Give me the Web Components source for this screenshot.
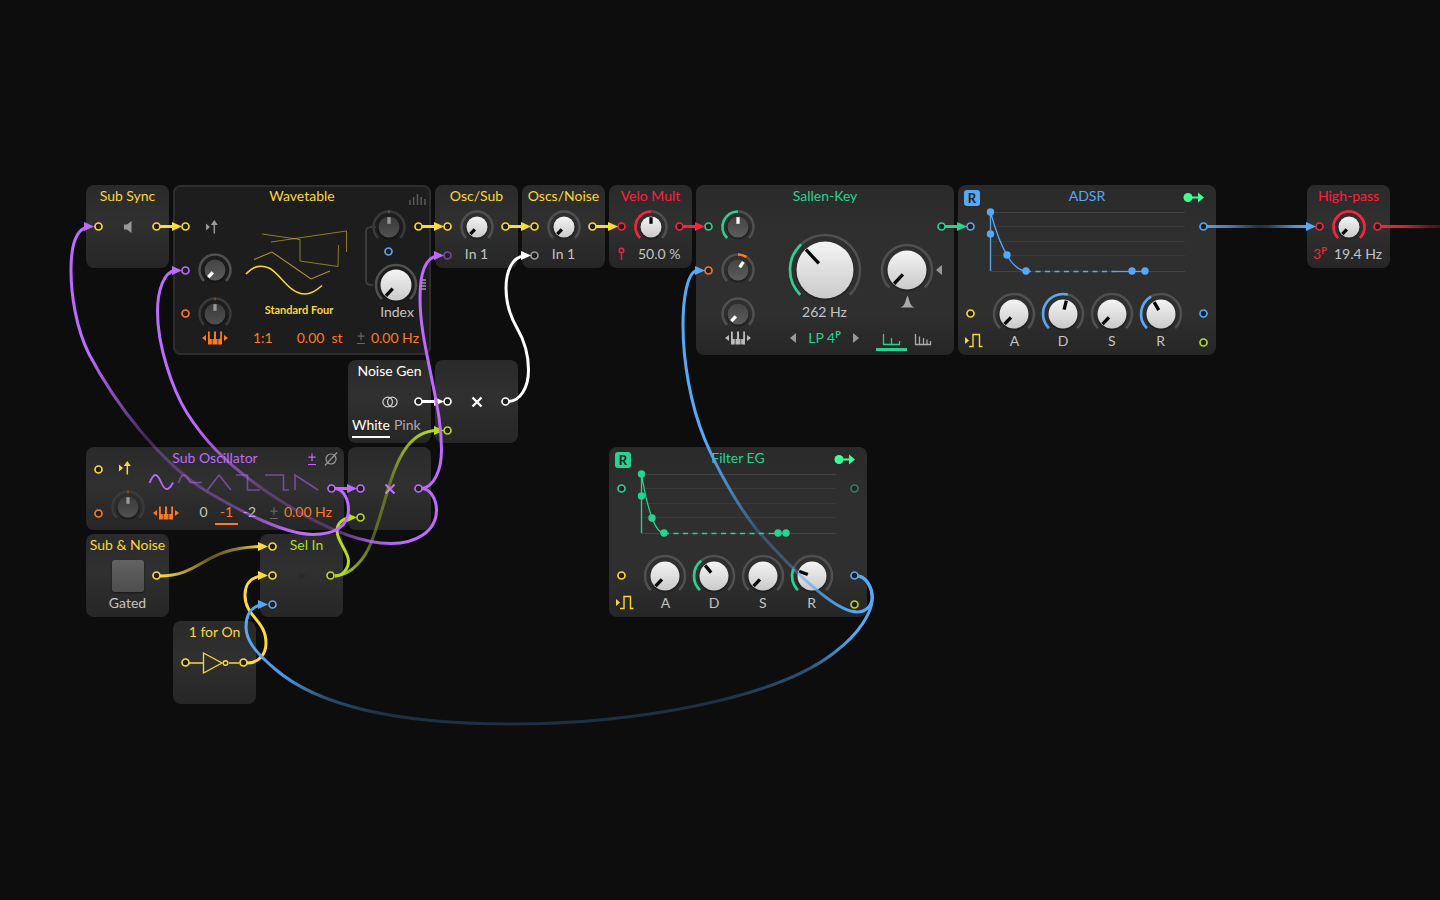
<!DOCTYPE html>
<html lang="en">
<head>
<meta charset="utf-8">
<title>Synth patch</title>
<style>
  body { margin: 0; background: #0d0d0d; font-family: Lato, "Open Sans", sans-serif; }
</style>
</head>
<body>
<synth-patch></synth-patch>

<template id="patch">
  <style>
    :host {
      --yellow: #fbd838; --purple: #bd6bff; --orange: #ff7a1a; --red: #ff1f3d;
      --green: #26d391; --blue: #57a8f5; --lime: #b4dc1c; --grey: #c4c4c4;
      display: block; position: relative; min-height: 100vh; overflow: hidden;
      color: var(--grey); font-size: 14px;
    }
    patch-node { color: var(--tint); }
    .yellow { --tint: var(--yellow); } .purple { --tint: var(--purple); }
    .orange { --tint: var(--orange); } .red { --tint: var(--red); }
    .green { --tint: var(--green); } .blue { --tint: var(--blue); }
    .lime { --tint: var(--lime); } .white { --tint: #fff; } .grey { --tint: #999; }
    .dim { opacity: .5; }
    .in { grid-column: 1; justify-self: start; }
    .out { grid-column: -2 / -1; justify-self: end; }
    .r1 { grid-row: 1; } .r2 { grid-row: 2; } .r3 { grid-row: 3; } .r5 { grid-row: 5; } .r6 { grid-row: 6; }
    .r34 { grid-row: 3 / 5; align-self: center; }
    .c2 { grid-column: 2; } .c8 { grid-column: 8; }
    .mid { place-self: center; }
    .top { align-self: start; }
    .all { grid-column: 1 / -1; }
    .label { color: var(--grey); line-height: 25px; align-self: start; text-align: center; white-space: nowrap; }
    patch-port, patch-glyph, patch-knob, .tint { color: var(--tint); }
    .from2 { grid-column: 2 / -1; text-align: left; padding-left: 2px; }
    .row { display: flex; align-items: center; line-height: 20px; align-self: start; white-space: nowrap; }
    button { all: unset; cursor: pointer; display: flex; align-items: center; justify-content: center; }
    label { position: relative; cursor: pointer; }
    label input { position: absolute; inset: 0; margin: 0; opacity: 0; width: 100%; height: 100%; }
    fieldset { border: 0; margin: 0; padding: 0; min-width: 0; }
    .choice { line-height: 18px; }
    .choice label { height: 20px; text-align: center; border-bottom: 2px solid transparent; }
    .choice label:has(:checked) { color: var(--tint); border-color: var(--tint); }
    .modes label { height: 20px; border-bottom: 3px solid transparent; }
    .modes label:has(:checked) { border-color: var(--tint); }
    sup { font-size: 9px; line-height: 0; vertical-align: 5px; font-weight: 700; }
    .badge { grid-area: 1 / 1; width: 16px; height: 16px; margin: 5px 0 0 6px; align-self: start;
      border-radius: 3px; background: var(--tint); color: #222; font-weight: 700; font-size: 13px; line-height: 16px; }
    .graph, .knobs { grid-column: 2 / 9; padding: 0 3px 0 5px; }
    .graph { grid-row: 2 / 4; }
    .knobs { grid-row: 5 / 7; display: grid; grid-template-columns: repeat(4, 1fr); align-items: start; }
    .knobs div { display: grid; grid-template-rows: 29px 26px; place-items: center; color: var(--grey); line-height: 26px; }
    .pad { width: 32px; height: 32px; border-radius: 3px; background: linear-gradient(#626262, #4e4e4e); box-shadow: 0 1px 2px #161616; }
  </style>

  <patch-node class="yellow" name="Sub Sync" style="left:86px;top:185px">
    <patch-port class="in r2"></patch-port>
    <patch-glyph name="speaker" class="c2 r2 mid grey"></patch-glyph>
    <patch-port class="out r2"></patch-port>
  </patch-node>

  <patch-node class="yellow" name="Wavetable" wide selected style="left:173px;top:185px">
    <patch-glyph name="bars" class="out r1 grey dim" style="align-self:center;margin-right:5px"></patch-glyph>
    <patch-port class="in r2"></patch-port>
    <patch-port class="in r34 purple"></patch-port>
    <patch-port class="in r5 orange"></patch-port>
    <patch-glyph name="retrig" class="c2 r2 mid grey"></patch-glyph>
    <patch-knob class="c2 r34 mid" label="Pitch mod" dark value="-137"></patch-knob>
    <patch-knob class="c2 r5 mid orange" label="Glide" dark faint tick value="0"></patch-knob>
    <patch-glyph name="keys" class="c2 r6 orange top" style="justify-self:center"></patch-glyph>
    <div style="grid-area:2/3/6/8;width:138px;padding:17px 0 0 1px;display:flex;flex-direction:column;align-items:center;align-self:start">
      <patch-glyph name="tables"></patch-glyph>
      <span style="font-size:11px;line-height:18px;font-weight:700">Standard Four</span>
    </div>
    <patch-glyph name="bracket" style="grid-area:2/7/5/8;place-self:center end"></patch-glyph>
    <patch-knob class="c8 r2 mid blue" label="Unison" dark faint tick value="0"></patch-knob>
    <patch-port class="c8 r3 blue top" style="--h:20px;justify-self:center"></patch-port>
    <div style="grid-area:4/8/5/10;display:flex;align-items:center;gap:2px;place-self:center start">
      <patch-knob label="Index" size="44" cap="15" arc="20" value="-137"></patch-knob>
      <patch-glyph name="stripes" class="grey"></patch-glyph>
    </div>
    <span class="label" style="grid-area:5/8/6/10;width:46px">Index</span>
    <div class="row tint orange" style="grid-area:6/3/7/10;padding:0 12px 0 24px">
      <output>1:1</output>
      <output style="margin-left:24px">0.00</output><span style="margin-left:7px">st</span>
      <patch-glyph name="pm" style="--tint:#666;margin-left:auto"></patch-glyph><output style="margin-left:6px">0.00 Hz</output>
    </div>
    <patch-port class="out r2"></patch-port>
  </patch-node>

  <patch-node class="yellow" name="Osc/Sub" style="left:435px;top:185px">
    <patch-port class="in r2"></patch-port>
    <patch-port class="in r3 purple dim"></patch-port>
    <patch-knob class="c2 r2 mid" label="Osc/Sub blend" value="-137"></patch-knob>
    <span class="label all r3">In 1</span>
    <patch-port class="out r2"></patch-port>
  </patch-node>

  <patch-node class="yellow" name="Oscs/Noise" style="left:522px;top:185px">
    <patch-port class="in r2"></patch-port>
    <patch-port class="in r3 grey"></patch-port>
    <patch-knob class="c2 r2 mid" label="Oscs/Noise blend" value="-137"></patch-knob>
    <span class="label all r3">In 1</span>
    <patch-port class="out r2"></patch-port>
  </patch-node>

  <patch-node class="red" name="Velo Mult" style="left:609px;top:185px">
    <patch-port class="in r2"></patch-port>
    <patch-glyph name="pin" class="in r3 top"></patch-glyph>
    <patch-knob class="c2 r2 mid" label="Velocity" value="0" fill="-135"></patch-knob>
    <span class="label from2 r3">50.0 %</span>
    <patch-port class="out r2"></patch-port>
  </patch-node>

  <patch-node class="green" name="Sallen-Key" wide style="left:696px;top:185px">
    <patch-port class="in r2"></patch-port>
    <patch-port class="in r34 orange"></patch-port>
    <patch-knob class="c2 r2 mid" label="Gain" dark value="0" fill="-135"></patch-knob>
    <patch-knob class="c2 r34 mid orange" label="Cutoff mod" dark value="33" fill="0"></patch-knob>
    <patch-knob class="c2 r5 mid" label="Keytrack" dark value="-137"></patch-knob>
    <patch-glyph name="keys" class="c2 r6 top" style="--tint:#bbb;justify-self:center"></patch-glyph>
    <patch-knob style="grid-area:3/4/5/7;place-self:center" label="Cutoff" size="74" cap="28" arc="35" value="-43" fill="-135"></patch-knob>
    <span class="label" style="grid-area:5/3/6/8">262 Hz</span>
    <div class="row" style="grid-area:6/3/7/8;justify-content:center;gap:12px">
      <button aria-label="Previous mode"><patch-glyph name="left" class="grey"></patch-glyph></button>
      <span>LP 4<sup>P</sup></span>
      <button aria-label="Next mode"><patch-glyph name="right" class="grey"></patch-glyph></button>
    </div>
    <div style="grid-area:3/7/5/10;display:flex;align-items:center;justify-content:flex-end;gap:2px;padding-right:12px">
      <patch-knob label="Resonance" size="54" cap="19" arc="25" value="-137"></patch-knob>
      <patch-glyph name="left" class="grey"></patch-glyph>
    </div>
    <patch-glyph name="peak" class="top" style="grid-area:5/7/6/10;width:82px;--tint:#aaa"></patch-glyph>
    <fieldset class="row modes" style="grid-area:6/7/7/10;padding-left:8px" aria-label="Resonance mode">
      <label style="width:31px"><input type="radio" name="res" aria-label="Few poles" checked><patch-glyph name="comb3"></patch-glyph></label>
      <label style="width:32px"><input type="radio" name="res" aria-label="Many poles"><patch-glyph name="comb5" style="--tint:#aaa"></patch-glyph></label>
    </fieldset>
    <patch-port class="out r2"></patch-port>
  </patch-node>

  <patch-node class="blue" name="ADSR" wide style="left:958px;top:185px">
    <button class="badge" aria-label="Retrigger">R</button>
    <patch-glyph name="send" style="grid-area:1/8/2/10;justify-self:end;margin-right:12px;--tint:#3dff94"></patch-glyph>
    <patch-port class="in r2"></patch-port>
    <patch-port class="in r5 yellow"></patch-port>
    <patch-glyph name="gate" class="in r6 yellow top"></patch-glyph>
    <envelope-graph class="graph" points="17,43 36,59 142,59 155,59" dash="126"></envelope-graph>
    <div class="knobs">
      <div><patch-knob label="Attack" size="46" cap="14" arc="20" value="-137"></patch-knob>A</div>
      <div><patch-knob label="Decay" size="46" cap="14" arc="20" value="14" fill="-135"></patch-knob>D</div>
      <div><patch-knob label="Sustain" size="46" cap="14" arc="20" value="-137"></patch-knob>S</div>
      <div><patch-knob label="Release" size="46" cap="14" arc="20" value="-30" fill="-135"></patch-knob>R</div>
    </div>
    <patch-port class="out r2"></patch-port>
    <patch-port class="out r5"></patch-port>
    <patch-port class="out r6 lime"></patch-port>
  </patch-node>

  <patch-node class="red" name="High-pass" style="left:1307px;top:185px">
    <patch-port class="in r2"></patch-port>
    <patch-knob class="c2 r2 mid" label="Frequency" value="-137" fill="135"></patch-knob>
    <span class="label in r3 tint" style="padding-left:6px">3<sup>P</sup></span>
    <span class="label from2 r3" style="padding-left:0">19.4 Hz</span>
    <patch-port class="out r2"></patch-port>
  </patch-node>

  <patch-node class="white" name="Noise Gen" style="left:348px;top:360px">
    <patch-glyph name="rings" class="c2 r2 mid" style="--tint:#ccc"></patch-glyph>
    <patch-port class="out r2"></patch-port>
    <fieldset class="row choice all r3" style="padding-left:4px;gap:4px;color:#aaa" aria-label="Noise colour">
      <label><input type="radio" name="noise" checked>White</label>
      <label><input type="radio" name="noise">Pink</label>
    </fieldset>
  </patch-node>

  <patch-node class="white" style="left:435px;top:360px">
    <patch-port class="in r2"></patch-port>
    <patch-port class="in r3 lime"></patch-port>
    <patch-glyph name="times" class="c2 r2 mid"></patch-glyph>
    <patch-port class="out r2"></patch-port>
  </patch-node>

  <patch-node class="purple" name="Sub Oscillator" wide short style="left:86px;top:447px">
    <div class="row" style="grid-area:1/8/2/10;justify-content:flex-end;gap:8px;padding:5px 6px 0 0">
      <patch-glyph name="pm"></patch-glyph><patch-glyph name="phase" class="grey"></patch-glyph>
    </div>
    <patch-port class="in yellow top" style="grid-row:1/3;--h:44px"></patch-port>
    <patch-port class="in r3 orange top" style="--h:20px"></patch-port>
    <patch-glyph name="retrig" class="c2 yellow top" style="grid-row:1/3;height:42px;justify-self:center"></patch-glyph>
    <patch-knob class="c2 orange" style="grid-row:2/4;place-self:center;padding-top:8px" label="Glide" dark faint tick value="0"></patch-knob>
    <div class="row" style="grid-area:2/3/3/10;gap:5px;padding-left:7px">
      <button aria-label="Sine"><patch-glyph name="sine"></patch-glyph></button>
      <button aria-label="Half sine" class="dim"><patch-glyph name="half"></patch-glyph></button>
      <button aria-label="Triangle" class="dim"><patch-glyph name="tri"></patch-glyph></button>
      <button aria-label="Square" class="dim"><patch-glyph name="square"></patch-glyph></button>
      <button aria-label="Pulse" class="dim"><patch-glyph name="pulse"></patch-glyph></button>
      <button aria-label="Saw" class="dim"><patch-glyph name="saw"></patch-glyph></button>
    </div>
    <patch-port class="out r2"></patch-port>
    <div class="row" style="grid-area:3/3/4/10;padding:0 12px 0 10px;align-items:flex-start;line-height:18px">
      <patch-glyph name="keys" class="orange"></patch-glyph>
      <fieldset class="row choice orange" style="margin-left:12px;color:#c4c4c4" aria-label="Octave">
        <label style="width:23px"><input type="radio" name="oct">0</label>
        <label style="width:23px"><input type="radio" name="oct" checked>-1</label>
        <label style="width:23px"><input type="radio" name="oct">-2</label>
      </fieldset>
      <patch-glyph name="pm" style="--tint:#666;margin:3px 0 0 auto"></patch-glyph>
      <output class="tint orange" style="margin-left:6px">0.00 Hz</output>
    </div>
  </patch-node>

  <patch-node class="purple" style="left:348px;top:447px">
    <patch-port class="in r2"></patch-port>
    <patch-port class="in r3 lime"></patch-port>
    <patch-glyph name="times" class="c2 r2 mid"></patch-glyph>
    <patch-port class="out r2"></patch-port>
  </patch-node>

  <patch-node class="yellow" name="Sub &amp; Noise" style="left:86px;top:534px">
    <button class="c2 r2 mid pad" aria-label="Gate"></button>
    <span class="label all r3">Gated</span>
    <patch-port class="out r2"></patch-port>
  </patch-node>

  <patch-node class="lime" name="Sel In" shifted style="left:260px;top:534px">
    <patch-port class="in r1 yellow top" style="--h:25px"></patch-port>
    <patch-port class="in r2 yellow"></patch-port>
    <patch-port class="in r3 blue"></patch-port>
    <patch-glyph name="dot" class="c2 r2 mid"></patch-glyph>
    <patch-port class="out r2"></patch-port>
  </patch-node>

  <patch-node class="yellow" name="1 for On" style="left:173px;top:621px">
    <patch-port class="in r2"></patch-port>
    <patch-glyph name="not" class="c2 r2 mid"></patch-glyph>
    <patch-port class="out r2"></patch-port>
  </patch-node>

  <patch-node class="green" name="Filter EG" wide style="left:609px;top:447px">
    <button class="badge" aria-label="Retrigger">R</button>
    <patch-glyph name="send" style="grid-area:1/8/2/10;justify-self:end;margin-right:12px;--tint:#3dff94"></patch-glyph>
    <patch-port class="in r2"></patch-port>
    <patch-port class="in r5 yellow"></patch-port>
    <patch-glyph name="gate" class="in r6 yellow top"></patch-glyph>
    <envelope-graph class="graph" points="11,44 23,59 137,59 145,59" dash="129"></envelope-graph>
    <div class="knobs">
      <div><patch-knob label="Attack" size="46" cap="14" arc="20" value="-137"></patch-knob>A</div>
      <div><patch-knob label="Decay" size="46" cap="14" arc="20" value="-40" fill="-135"></patch-knob>D</div>
      <div><patch-knob label="Sustain" size="46" cap="14" arc="20" value="-137"></patch-knob>S</div>
      <div><patch-knob label="Release" size="46" cap="14" arc="20" value="-70" fill="-135"></patch-knob>R</div>
    </div>
    <patch-port class="out r2 dim"></patch-port>
    <patch-port class="out r5 blue"></patch-port>
    <patch-port class="out r6 lime"></patch-port>
  </patch-node>

  <patch-wires></patch-wires>
</template>

<script>
const shadow = (el, html) => { el.attachShadow({ mode: 'open' }).innerHTML = html; };

customElements.define('patch-node', class extends HTMLElement {
  connectedCallback() {
    const name = this.getAttribute('name') || '';
    shadow(this, `<style>
      :host { position: absolute; box-sizing: border-box; display: grid; width: 83px; height: 83px;
        grid-template-columns: 27px 29px 27px; grid-template-rows: 27px 29px 29px;
        border-radius: 8px; background: linear-gradient(#2a2a2a, #303030 45%, #262626); }
      :host([wide]) { width: 258px; height: 170px; grid-template-columns: 27px repeat(7, 29px) 28px;
        grid-template-rows: 27px repeat(5, 29px); background: linear-gradient(#2a2a2a, #2f2f2f 30%, #2f2f2f 75%, #262626); }
      :host([short]) { height: 83px; grid-template-rows: 27px 29px 29px; background: linear-gradient(#2a2a2a, #303030 45%, #262626); }
      :host([selected]) { background: #1d1d1d; box-shadow: inset 0 0 0 2px #2d2d2d; }
      h2 { grid-area: 1 / 1 / 2 / -1; margin: 0; font-size: 14px; font-weight: 400; line-height: 22px;
        text-align: center; white-space: nowrap; }
      :host([shifted]) h2 { padding-left: 10px; }
    </style>${name ? `<h2>${name.replace('&', '&amp;')}</h2>` : ''}<slot></slot>`);
  }
});

customElements.define('patch-port', class extends HTMLElement {
  connectedCallback() {
    shadow(this, `<style>
      :host { display: grid; place-items: center; width: 25px; height: var(--h, 29px); }
      svg { display: block; }
    </style><svg width="9" height="9" aria-hidden="true"><circle cx="4.5" cy="4.5" r="3.5" fill="#1f1f1f" stroke="currentColor" stroke-width="1.7"/></svg>`);
  }
});

customElements.define('patch-knob', class extends HTMLElement {
  connectedCallback() {
    const num = (k, d) => this.hasAttribute(k) ? +this.getAttribute(k) : d;
    const size = num('size', 36), cap = num('cap', 10), arc = num('arc', 15.5), value = num('value', 0);
    const dark = this.hasAttribute('dark'), faint = this.hasAttribute('faint');
    const pt = (a, r) => { const t = a * Math.PI / 180; return `${(r * Math.sin(t)).toFixed(2)} ${(-r * Math.cos(t)).toFixed(2)}`; };
    const sweep = (a, b) => { const [s, e] = a < b ? [a, b] : [b, a]; return `M${pt(s, arc)}A${arc} ${arc} 0 ${e - s > 180 ? 1 : 0} 1 ${pt(e, arc)}`; };
    const from = num('fill', null);
    const fill = from === null ? '' : `<path d="${from === 135 ? sweep(-135, 135) : sweep(from, value)}" fill="none" stroke="currentColor" stroke-width="2.6"/>`;
    const tick = this.hasAttribute('tick') ? `<path d="M0 ${-arc - 1}V${-arc + 2}" stroke="currentColor" opacity=".6"/>` : '';
    const hand = faint ? '#999' : dark ? '#fff' : '#080808';
    const [c1, c2] = dark ? (faint ? ['#3a3a3a', '#505050'] : ['#444', '#5c5c5c']) : ['#f4f4f4', '#cacaca'];
    shadow(this, `<style>
      :host { display: block; position: relative; width: ${size}px; height: ${size}px; }
      svg { display: block; }
      input { position: absolute; inset: 0; width: 100%; height: 100%; margin: 0; opacity: 0; cursor: pointer; }
    </style>
    <svg width="${size}" height="${size}" viewBox="${-size / 2} ${-size / 2} ${size} ${size}" aria-hidden="true">
      <defs><linearGradient id="g" x1="0" y1="0" x2="0" y2="1"><stop stop-color="${c1}"/><stop offset="1" stop-color="${c2}"/></linearGradient></defs>
      <path d="${sweep(-135, 135)}" fill="none" stroke="${faint ? '#3a3a3a' : '#505050'}" stroke-width="2.5"/>${fill}${tick}
      <circle r="${cap + 1.5}" cy="1" fill="#000" opacity=".25"/>
      <circle r="${cap + .5}" fill="url(#g)"/>
      <path d="M${pt(value, cap - .2)}L${pt(value, cap * .32)}" stroke="${hand}" stroke-width="3.3"/>
    </svg>
    <input type="range" min="-137" max="137" value="${value}" aria-label="${this.getAttribute('label')}">`);
  }
});

const line = (d, w = 1.5) => `<path d="${d}" fill="none" stroke="currentColor" stroke-width="${w}"/>`;
const solid = d => `<path d="${d}" fill="currentColor"/>`;
const ring = (x, y, r, w) => `<circle cx="${x}" cy="${y}" r="${r}" fill="none" stroke="currentColor" stroke-width="${w}"/>`;
/* Glyph name: [width, height, markup]. */
const glyphs = {
  speaker: [10, 12, solid('M1 3.5H4L8.5 0V12L4 8.5H1z')],
  bars: [17, 12, line('M1 12V7M4.7 12V4M8.5 12V1M12.2 12V4M16 12V6')],
  stripes: [6, 12, line('M1 1H6M1 4H6M1 7H6M1 10H6', 1.3)],
  retrig: [22, 16, solid('M2 4.5L6 8L2 11.5zM6.8 6L10.3 1L13.8 6z') + line('M10.3 4V14.5')],
  keys: [28, 20, solid('M5 7V13L1 10zM23 7V13L27 10z') + solid('M7 3.5H8.8V11H10.8V16.5H7zM11.5 16.5V11H13V3.5H15V11H16.5V16.5zM17.2 16.5V11H19.2V3.5H21V16.5z')],
  tables: [108, 72, `<g opacity=".5">${line('M17 5L55 10.5V32L93 37.5L93.5 16M26 13L101.500 2V23', 1)}</g><g opacity=".65">${line('M9 30.5L27 23L66 50L85 42', 1.1)}</g>`
    + line('M1 45C8 37 16 35.5 24 39C36 45 44 65 60 65C67 65 72 61 77 56.5')],
  bracket: [12, 60, '<path d="M14 1H9Q4 1 4 6V54Q4 59 9 59H11" fill="none" stroke="#3c3c3c" stroke-width="2"/>'],
  pin: [25, 26, ring(12.5, 9.5, 2.3, 1.4) + line('M12.5 12V19', 1.4)],
  left: [6, 10, solid('M6 0V10L0 5z')],
  right: [6, 10, solid('M0 0V10L6 5z')],
  peak: [82, 14, solid('M32 8.5C38 8 38 -3 39.5 -3C41 -3 41 8 47 8.5z')],
  comb3: [31, 19, line('M7.5 6V16.5H23.5V13M15.500 16V10', 1.3)],
  comb5: [32, 19, line('M8.5 6V16.5H23.5V13M12.5 16V8.500M16.500 16V10M20 16V11.5', 1.3)],
  send: [22, 27, '<circle cx="6" cy="12.5" r="4.5" fill="currentColor"/>' + line('M6 12.5H17', 2) + solid('M16 7.5L22 12.5L16 17.5z')],
  gate: [25, 26, solid('M7 9V16L11 12.5z') + line('M11 18.5H15V6.500H21.5V18.5H24.5', 1.4)],
  rings: [16, 12, ring(5.7, 6, 4.8, 1.3) + ring(10.3, 6, 4.8, 1.3)],
  times: [10, 10, line('M.5 .5L9.5 9.5M9.5 .5L.5 9.5', 2.3)],
  pm: [8, 14, line('M4 1.5V9M.5 5.2H7.5M0 12.5H8', 1.2)],
  phase: [14, 14, ring(7, 7, 5, 1.2) + line('M1 13.5L13 .5', 1.2)],
  sine: [24, 20, line('M.5 9C5 -2 8 -1 12 8S19 18 24 8.5', 1.8)],
  half: [24, 20, line('M.5 9C4 -2 8 -1 12 8.5H24', 1.6)],
  tri: [24, 20, line('M.5 16L12 1L24 16', 1.6)],
  square: [24, 20, line('M0 1H11.5V16H24', 1.6)],
  pulse: [24, 20, line('M0 1H18.5V16H24', 1.6)],
  saw: [24, 20, line('M1 16V1L24 16', 1.6)],
  dot: [8, 8, '<circle cx="4" cy="4" r="3" fill="#2a2a2a"/>'],
  not: [52, 24, line('M0 12H14M40 12H50', 1.3) + line('M14.5 2V22L33 12z', 1.3) + ring(36.5, 12, 2.3, 1.4)],
};

customElements.define('patch-glyph', class extends HTMLElement {
  connectedCallback() {
    const [w, h, body] = glyphs[this.getAttribute('name')];
    shadow(this, `<style>:host { display: flex; align-items: center; width: ${w}px; height: ${h}px; } svg { display: block; overflow: visible; flex: none; }</style>
      <svg width="${w}" height="${h}" viewBox="0 0 ${w} ${h}" aria-hidden="true">${body}</svg>`);
  }
});

customElements.define('envelope-graph', class extends HTMLElement {
  connectedCallback() {
    const pts = this.getAttribute('points').split(' ').map(p => p.split(',').map(Number));
    const [d, s, , r] = pts, dash = this.getAttribute('dash');
    const rule = y => `<line x1="0" x2="100%" y1="${y}.5" y2="${y}.5"/>`;
    shadow(this, `<style>:host { display: block; } svg { display: block; width: 100%; height: 59px; overflow: visible; }</style>
      <svg role="img" aria-label="Envelope">
        <g stroke="#434343">${[0, 59].map(rule).join('')}</g>
        <g stroke="#3a3a3a">${[14, 29, 43].map(rule).join('')}</g>
        <g fill="none" stroke="currentColor" stroke-width="1.3">
          <path d="M.5 59V0C${d[0] * .35} 20 ${d[0] * .6} 32 ${d[0]} ${d[1]}C${d[0] * 1.35} 54 ${s[0] * .85} 59 ${s[0]} 59"/>
          <path d="M${s[0]} 59.5H${dash}" stroke-dasharray="5 4.5"/><path d="M${dash} 59.5H${r[0]}"/>
        </g>
        <g fill="currentColor">${[[.5, 0], [.5, 22], ...pts].map(p => `<circle cx="${p[0]}" cy="${p[1]}" r="3.7"/>`).join('')}</g>
      </svg>`);
  }
});

const hue = { yellow: '#ffdb3a', purple: '#bd6bff', red: '#ff1f3d', green: '#26d391', blue: '#57a8f5', lime: '#b4dc1c', white: '#ffffff' };
/* Each wire: colour, path, arrow tip, optional fade [x1, y1, x2, y2, [offset, opacity]...]. */
const wires = [
  ['yellow', 'M160 226.5H174', [182, 226.5]],
  ['yellow', 'M422 226.5H436', [444, 226.5]],
  ['yellow', 'M509 226.5H523', [531, 226.5]],
  ['yellow', 'M596 226.5H610', [618, 226.5]],
  ['red', 'M683 226.5H697', [705, 226.5]],
  ['green', 'M945 226.5H959', [967, 226.5]],
  ['blue', 'M1207 226.5L1309 226.6', [1316, 226.5], [1207, 226, 1309, 226, [0, .9], [.2, .75], [.5, .25], [.6, .3], [.85, .85], [1, 1]]],
  ['red', 'M1381 226.5L1480 226.6', null, [1381, 226, 1440, 226, [0, 1], [.4, .85], [.85, .35], [1, .25]]],
  ['white', 'M422 401.5H436', [444, 401.5]],
  ['purple', 'M335 488.5H349', [357, 488.5]],
  ['lime', 'M335 576C352 575 365 558 371 543C379 522 384 502 390 483C399 455 411 431 437 430.5', [444, 430.5], [335, 576, 437, 431, [0, 1], [.12, .7], [.3, .4], [.6, .4], [.85, .8], [1, 1]]],
  ['lime', 'M335 576C343 576 348.5 568 348.5 561C348.5 552 337 541 337 531C337 523 343 518 352 517.5', [357, 517.5]],
  ['yellow', 'M160 576C202 576 203 547 262 546.5', [268, 546.5], [160, 0, 262, 0, [0, 1], [.25, .7], [.5, .35], [.75, .55], [1, 1]]],
  ['yellow', 'M247 663C258 663 266 655 266 643C266 620 245 617 245 595C245 585 250 577 262 576', [268, 575.5]],
  ['purple', 'M335 488.5C344 489 348.5 500 348.5 510C348.5 526 335 534.5 313 534.5C285 534.5 240 511 207 491.5C160 463 114 402 89 354C76 328 71 295 71 270C71 245 76 229 88 227', [94, 226.5], [330, 540, 80, 340, [0, 1], [.1, 1], [.3, .4], [.65, .3], [.83, .75], [.95, 1]]],
  ['purple', 'M422 488.5C431 489 436.5 500 436.5 510C436.5 532 415 543.5 391 543.5C350 543.5 300 515 260 487C222 460 203 438 187 413C172 389 157.5 345 157.5 312C157.5 290 164 272 175 270.5', [182, 270.5], [400, 545, 180, 400, [0, 1], [.1, .8], [.25, .3], [.55, .3], [.75, .7], [.9, 1]]],
  ['purple', 'M422 488.5C434 487 441.5 470 441.5 450C441.5 425 437 405 432 380C426 350 420 325 420 298C420 275 425 258 437 256', [444, 255.5]],
  ['white', 'M509 401.5C520 401 528.5 388 528.5 370C528.5 352 524 340 517 328C510 316 506 302 506 288C506 270 513 257 524 256', [531, 255.5]],
  ['blue', 'M858 576C868 577 872.5 590 872.5 598C872 612 860 633 835 652C775 700 630 724 511 724C400 724 318 706 275 669C255 652 246 640 246 627C246 615 251 606 262 605', [268, 604.5], [246, 0, 872, 0, [0, 1], [.06, .9], [.13, .4], [.22, .22], [.75, .22], [.9, .45], [.97, 1]]],
  ['blue', 'M858 576C866 577 872 588 872 597C872 606 866 612 857 612C838 612 805 584 757 530C735 502 716 466 705 440C690 404 683 360 683 325C683 300 687 272 697 270.5', [705, 270.5], [857, 612, 705, 440, [0, 1], [.15, .8], [.35, .35], [.55, .3], [.8, .75], [1, 1]]],
];

customElements.define('patch-wires', class extends HTMLElement {
  connectedCallback() {
    const body = wires.map(([c, d, tip, fade], i) => {
      const grad = fade ? `<linearGradient id="w${i}" gradientUnits="userSpaceOnUse" x1="${fade[0]}" y1="${fade[1]}" x2="${fade[2]}" y2="${fade[3]}">${
        fade.slice(4).map(([o, a]) => `<stop offset="${o}" stop-color="${hue[c]}" stop-opacity="${a}"/>`).join('')}</linearGradient>` : '';
      const head = tip ? `<path d="M${tip[0] - 10} ${tip[1] - 4.5}L${tip[0]} ${tip[1]}L${tip[0] - 10} ${tip[1] + 4.5}z" fill="${hue[c]}"/>` : '';
      return `${grad}<path d="${d}" fill="none" stroke="${fade ? `url(#w${i})` : hue[c]}" stroke-width="3"/>${head}`;
    }).join('');
    shadow(this, `<style>:host { position: absolute; inset: 0; pointer-events: none; } svg { display: block; width: 100%; height: 100%; }</style>
      <svg aria-hidden="true">${body}</svg>`);
  }
});

customElements.define('synth-patch', class extends HTMLElement {
  connectedCallback() {
    this.attachShadow({ mode: 'open' }).append(document.getElementById('patch').content.cloneNode(true));
  }
});
</script>
</body>
</html>
